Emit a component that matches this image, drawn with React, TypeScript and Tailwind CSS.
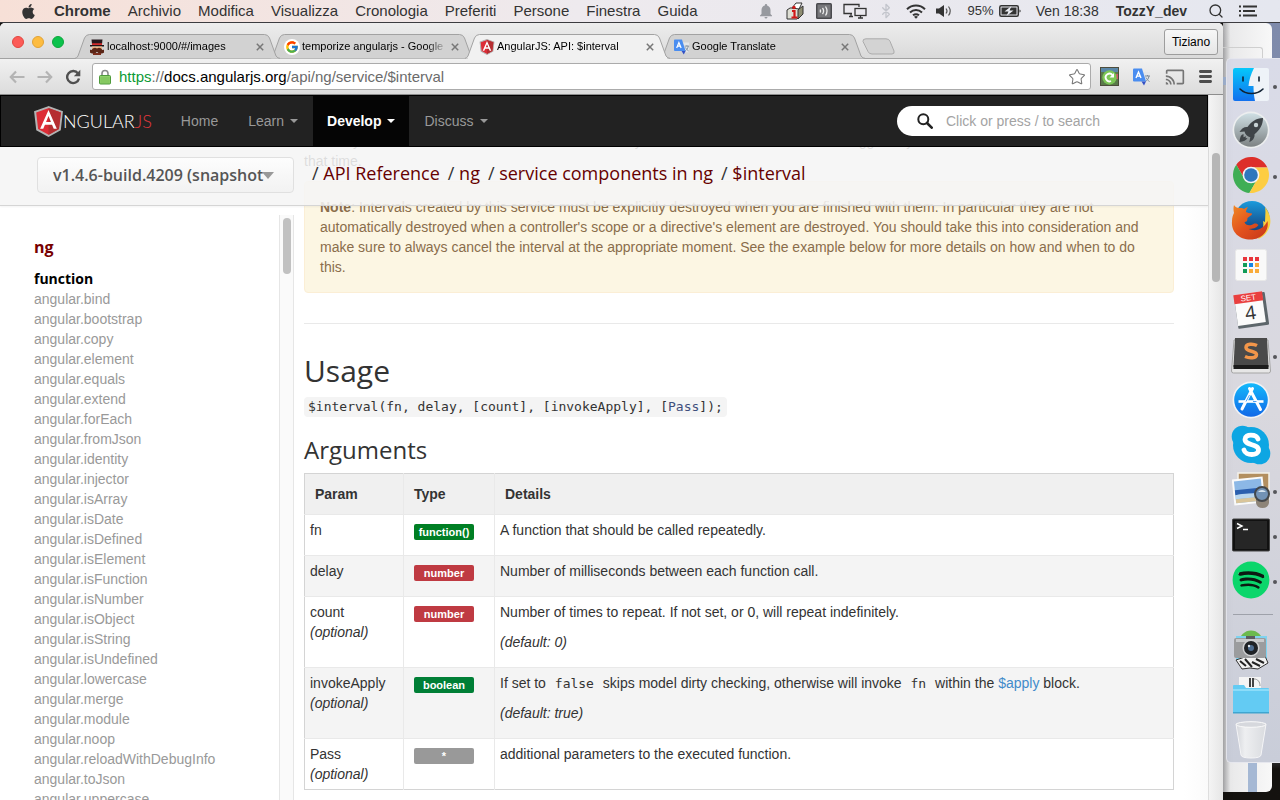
import React from "react";
import { FaApple, FaSpotify } from "react-icons/fa";
import { FcGoogle } from "react-icons/fc";
import { MdNotifications, MdCast } from "react-icons/md";
import { Bluetooth, Search, Star } from "lucide-react";

const sans = "font-['Liberation_Sans',Arial,sans-serif]";
const open = "font-['Open_Sans',sans-serif]";
const mono = "font-['DejaVu_Sans_Mono',monospace]";

/* ---------- Small icons ---------- */

function AngularShield({ className }: { className: string }) {
  return (
    <svg viewBox="24 22 202 216" className={className} aria-hidden="true">
      <path d="M125 30L31.9 63.2l14.2 123.1L125 230l78.9-43.7 14.2-123.1z" fill="#dd2c36" stroke="#b3b3b3" strokeWidth="14" />
      <path d="M125 36v188l73-41 14-116z" fill="#b52e31" />
      <path d="M125 50L66.8 180h21.7l11.7-28h49.4l11.7 28H183L125 50zm17 83h-34l17-41 17 41z" fill="#fff" />
    </svg>
  );
}

function TranslateIcon({ className }: { className: string }) {
  return (
    <svg viewBox="0 0 18 18" className={className} aria-hidden="true">
      <path d="M8 4h9v11H10z" fill="#e4e6e8" />
      <path d="M12 8h5M14.500 7v1M16 8c-.5 3-2 4.500-3.500 5.500M13 9.500c.5 1.500 2 3 3.500 4" stroke="#7d8b99" strokeWidth="1" fill="none" />
      <path d="M0 1.500Q0 .5 1 .5h8l4 13H1q-1 0-1-1z" fill="#4a8df0" />
      <path d="M8.500 13.500H13l-2 4z" fill="#3451c4" />
      <path d="M3 10L5.500 4l2.500 6M3.900 8.100h3.200" stroke="#fff" strokeWidth="1.400" fill="none" />
    </svg>
  );
}

function MustacheMan() {
  return (
    <svg viewBox="0 0 16 16" className="size-4" aria-hidden="true">
      <path d="M2.500.5h11l-.6 5.500H3.100z" fill="#26181c" />
      <path d="M3 4.300h10V6H3z" fill="#d32b2b" />
      <path d="M1 6h14v1.600H1z" fill="#1f1517" />
      <path d="M3 7.600h10V12H3z" fill="#f0b98a" />
      <path d="M8 9.500c2-1.500 4-.5 5 1 .7.800 1.500.5 2 0v3c-1.500 1.500-5.500 1.500-7-.8-1.500 2.300-5.500 2.300-7 .8v-3c.5.5 1.300.8 2 0 1-1.500 3-2.500 5-1z" fill="#5b2617" />
      <path d="M4 14h8v2H4z" fill="#7a2d1c" />
    </svg>
  );
}

function Padlock() {
  return (
    <svg viewBox="0 0 12 16" className="h-4 w-3" aria-hidden="true">
      <path d="M3 7V4.500a3 3 0 0 1 6 0V7" fill="none" stroke="#8b8b8b" strokeWidth="1.600" />
      <rect x=".5" y="6.500" width="11" height="8.500" rx="1" fill="#8fd16a" stroke="#4f9a3c" />
      <path d="M1.500 9h9M1.500 11h9M1.500 13h9" stroke="#72b852" strokeWidth=".7" />
    </svg>
  );
}

function Caret() {
  return (
    <svg viewBox="0 0 8 4" className="ml-1.5 h-1 w-2 fill-current" aria-hidden="true">
      <path d="M0 0h8L4 4z" />
    </svg>
  );
}

/* ---------- Menu bar ---------- */

const menus = ["Archivio", "Modifica", "Visualizza", "Cronologia", "Preferiti", "Persone", "Finestra", "Guida"];

function MenuBar() {
  return (
    <header className="flex h-[23px] shrink-0 items-center border-b border-[#3c3c40] bg-linear-to-r from-[#f7e0d7] via-[#eeeaee] via-45% to-[#e5e7ef] text-[15px] leading-[22px] text-[#333]">
      <FaApple className="ml-5 size-[17px]" />
      <nav className="ml-[17px] flex gap-[17px]">
        <button className="font-bold">Chrome</button>
        {menus.map((m) => (
          <button key={m}>{m}</button>
        ))}
      </nav>
      <div className="ml-auto flex items-center">
        <MdNotifications className="mr-[11px] size-[18px] text-[#97999f]" />
        <svg viewBox="0 0 18 18" className="mr-3 size-[18px]" aria-hidden="true">
          <path d="M1 8l3-2 9 0v9l-2 2H1z" fill="#deded4" stroke="#333" />
          <path d="M6 6l4-5h6l-3 6z" fill="#fff" stroke="#333" />
          <path d="M13 7l4-3v8l-5 5V8z" fill="#8f8d72" stroke="#333" />
          <path d="M6 9h2.500v6M5.500 15.500h6" stroke="#d01818" strokeWidth="2.200" fill="none" />
          <circle cx="8" cy="5.500" r="1.700" fill="#d01818" />
        </svg>
        <svg viewBox="0 0 16 16" className="mr-[11px] size-4" aria-hidden="true">
          <rect width="16" height="16" rx="1.500" fill="#4a4a4e" />
          <rect x="1.500" y="1.500" width="13" height="13" fill="#77777b" />
          <path d="M4 6.500c.8 1 .8 2 0 3M6.500 5c1.500 2 1.500 4 0 6M9.500 3.500c2 3 2 6 0 9" stroke="#eee" strokeWidth="1.300" fill="none" />
        </svg>
        <svg viewBox="0 0 24 16" className="mr-[11px] h-4 w-6" fill="none" stroke="#333" strokeWidth="1.300" aria-hidden="true">
          <path d="M9 10.500H1V1.500h15V4M6 13.500h4M8 10.500v3" />
          <rect x="12" y="5.500" width="11" height="7" />
          <path d="M15 15h5M17.500 12.500V15" />
        </svg>
        <Bluetooth className="mr-3 size-4 text-[#c3c5cc]" strokeWidth={2} />
        <svg viewBox="0 0 20 15" className="mr-[9px] h-[15px] w-5" fill="none" stroke="#333" strokeWidth="2" aria-hidden="true">
          <path d="M1 5.200a13 13 0 0 1 18 0M4 8.400a9 9 0 0 1 12 0M7 11.300a5 5 0 0 1 6 0" />
          <path d="M10 14.800l-2-2a3 3 0 0 1 4 0z" fill="#333" stroke="none" />
        </svg>
        <svg viewBox="0 0 18 14" className="mr-[15px] h-3.5 w-[18px]" aria-hidden="true">
          <path d="M1 4.500h3L9 1v12L4 9.500H1z" fill="#333" />
          <path d="M11 4.500c1.200 1.500 1.200 3.500 0 5M13.500 2.500c2.300 3 2.300 6 0 9" stroke="#555" strokeWidth="1.200" fill="none" />
        </svg>
        <span className="mr-[5px] text-[13px]">95%</span>
        <svg viewBox="0 0 23 12" className="mr-3.5 h-3 w-[23px]" aria-hidden="true">
          <rect x=".8" y=".8" width="18.500" height="10.400" rx="1.500" fill="none" stroke="#333" strokeWidth="1.500" />
          <rect x="2.500" y="2.500" width="15" height="7" fill="#333" />
          <path d="M20.500 4.500c1.500.3 1.500 2.700 0 3z" fill="#333" />
          <path d="M12.500 1L5.500 6.600h4L7.500 11l7-5.600h-4z" fill="#eceef4" />
        </svg>
        <span className="mr-[17px] text-[14px]">Ven 18:38</span>
        <span className="mr-[21px] text-[14px] font-bold">TozzY_dev</span>
        <Search className="mr-[15px] size-4" strokeWidth={2} />
        <svg viewBox="0 0 18 12" className="mr-[23px] h-3 w-[18px]" stroke="#333" strokeWidth="2" aria-hidden="true">
          <path d="M0 1.500h2M4 1.500h14M0 6h2M4 6h12M0 10.500h2M4 10.500h14" />
        </svg>
      </div>
    </header>
  );
}

/* ---------- Browser chrome ---------- */

interface TabProps {
  title: string;
  icon: React.ReactNode;
  active?: boolean;
  layer: string;
}

function Tab({ title, icon, active, layer }: TabProps) {
  return (
    <div className={"relative -ml-2.5 flex h-[25px] w-[205px] items-center pr-[11px] pl-3.5 " + layer}>
      <svg viewBox="0 0 205 25" preserveAspectRatio="none" className="absolute inset-0 size-full" aria-hidden="true">
        <path
          d="M-1 24.500Q2 24.500 3 22L9.500 4Q11 .5 14.500 .5H189.500Q193 .5 194.500 4L201 22Q202.500 24.500 206 24.500"
          fill={active ? "#f1f1f1" : "#d2d2d2"}
          stroke="#a2a2a2"
        />
        {active && <path d="M3 24.500H202" stroke="#f1f1f1" strokeWidth="1.500" />}
      </svg>
      <span className="relative flex size-4 shrink-0 items-center justify-center">{icon}</span>
      <span className="relative ml-0.5 flex-1 overflow-hidden text-[11px] whitespace-nowrap text-black [mask-image:linear-gradient(to_right,black_85%,transparent)]">
        {title}
      </span>
      <button aria-label="Chiudi scheda" className="relative mr-0.5 flex size-3.5 shrink-0 items-center justify-center">
        <svg viewBox="0 0 8 8" className="size-2" stroke="#777" strokeWidth="1.500" aria-hidden="true">
          <path d="M.8.8l6.400 6.400M7.200.8L.8 7.200" />
        </svg>
      </button>
    </div>
  );
}

function TabStrip() {
  return (
    <div className="flex h-9 shrink-0 items-end border-b border-[#a2a2a2] bg-linear-to-b from-[#ededed] to-[#dadada] pl-3">
      <div className="flex h-full items-center gap-2 pt-0.5">
        <button aria-label="Chiudi" className="size-3 rounded-full border border-[#e2463f] bg-[#fc5b57]" />
        <button aria-label="Riduci" className="size-3 rounded-full border border-[#e1a336] bg-[#fdbc40]" />
        <button aria-label="Ingrandisci" className="size-3 rounded-full border border-[#0ea63d] bg-[#0bc24c]" />
      </div>
      <div className="-mb-px ml-[21px] flex">
        <Tab layer="z-[3]" title="localhost:9000/#/images" icon={<MustacheMan />} />
        <Tab
          layer="z-[2]"
          title="temporize angularjs - Google"
          icon={<span className="rounded-full bg-white p-px"><FcGoogle className="size-3.5" /></span>}
        />
        <Tab layer="z-[4]" active title="AngularJS: API: $interval" icon={<AngularShield className="size-4" />} />
        <Tab layer="z-[1]" title="Google Translate" icon={<TranslateIcon className="size-4" />} />
      </div>
      <button aria-label="Nuova scheda" className="mb-[3px] -ml-1">
        <svg viewBox="0 0 34 17" className="h-[17px] w-[34px]" aria-hidden="true">
          <path d="M5 .8h20q3 0 4 2.500L33 13q.8 3-2 3H11q-3 0-4-2.500L2 3.500Q1.500.8 5 .8z" fill="#d3d3d3" stroke="#ababab" />
        </svg>
      </button>
      <button className="mr-[5px] mb-[3px] ml-auto h-[26px] w-[54px] rounded-[3px] border border-[#9d9d9d] bg-linear-to-b from-[#f7f7f7] to-[#e6e6e6] text-[12px] text-black">
        Tiziano
      </button>
    </div>
  );
}

function Toolbar() {
  return (
    <div className="flex h-9 shrink-0 items-center border-b border-[#8d8d8d] bg-linear-to-b from-[#f1f1f1] to-[#dcdcdc] pl-[9px]">
      <button aria-label="Indietro">
        <svg viewBox="0 0 16 14" className="h-3.5 w-4" fill="none" stroke="#b4b4b4" strokeWidth="2.200" aria-hidden="true">
          <path d="M7 1.500L1.800 7 7 12.500M2 7h13.500" />
        </svg>
      </button>
      <button aria-label="Avanti" className="ml-3">
        <svg viewBox="0 0 16 14" className="h-3.5 w-4" fill="none" stroke="#b4b4b4" strokeWidth="2.200" aria-hidden="true">
          <path d="M9 1.500L14.200 7 9 12.500M14 7H.5" />
        </svg>
      </button>
      <button aria-label="Ricarica" className="ml-3">
        <svg viewBox="0 0 16 16" className="size-4" aria-hidden="true">
          <path d="M13 4.500A6 6 0 1 0 14 9.500" fill="none" stroke="#505050" strokeWidth="2.400" />
          <path d="M15.300.8v6.500H8.800z" fill="#505050" />
        </svg>
      </button>
      <div className="ml-[11px] flex h-[27px] flex-1 items-center rounded-[3px] border border-[#ababab] bg-white pr-1 pl-1.5">
        <Padlock />
        <a href="https://docs.angularjs.org/api/ng/service/$interval" className="ml-2 text-[15px] leading-[22px] text-[#6b6b6b]">
          <span className="text-[#0b9a36]">https</span>://<span className="text-black">docs.angularjs.org</span>/api/ng/service/$interval
        </a>
        <button aria-label="Preferiti" className="ml-auto">
          <Star className="size-[18px] text-[#777]" strokeWidth={1.4} />
        </button>
      </div>
      <div className="mr-[11px] ml-[9px] flex items-center gap-3.5">
        <svg viewBox="0 0 19 19" className="size-[19px]" aria-hidden="true">
          <rect x=".5" y=".5" width="18" height="18" fill="#5a7a4a" stroke="#4d4d3c" />
          <path d="M1 1h17v4H1z" fill="#5a87a8" />
          <path d="M16 7h2v5h-2z" fill="#c9566a" />
          <circle cx="9.500" cy="10.500" r="7.200" fill="#7cc756" />
          <path d="M12.500 8.200A3.800 3.800 0 1 0 11 14" fill="none" stroke="#fff" strokeWidth="1.900" />
          <path d="M14 6v4.500H9.500z" fill="#fff" />
        </svg>
        <TranslateIcon className="size-[18px]" />
        <MdCast className="size-5 text-[#757575]" />
        <button aria-label="Menu">
          <svg viewBox="0 0 13 13" className="h-[13px] w-[13px]" stroke="#4d4d4d" strokeWidth="2.800" strokeLinecap="round" aria-hidden="true">
            <path d="M1.400 1.500h10.200M1.400 6.500h10.200M1.400 11.500h10.200" />
          </svg>
        </button>
      </div>
    </div>
  );
}

/* ---------- Page ---------- */

function Navbar() {
  const link = "flex h-full items-center px-[15px]";
  return (
    <nav className="relative z-20 flex h-[52px] shrink-0 items-center border border-black bg-[#222] pr-[18px] text-[14px] text-[#999]">
      <a href="#top" className="ml-[33px] flex items-center font-['Lato',sans-serif] text-[18px] leading-5 font-light text-white">
        <AngularShield className="h-[31px] w-[29px]" />
        <span>
          NGULAR<span className="text-[#e0383d]">JS</span>
        </span>
      </a>
      <div className="ml-3.5 flex h-full">
        <a href="#home" className={link}>Home</a>
        <a href="#learn" className={link}>Learn<Caret /></a>
        <a href="#develop" className="flex h-full items-center bg-[#050505] px-3.5 font-bold text-white">Develop<Caret /></a>
        <a href="#discuss" className={link}>Discuss<Caret /></a>
      </div>
      <label className="ml-auto flex h-[30px] w-[292px] items-center rounded-full bg-white pl-5">
        <svg viewBox="0 0 16 16" className="size-4" fill="none" stroke="#222" aria-hidden="true">
          <circle cx="6.300" cy="6.300" r="5" strokeWidth="2" />
          <path d="M10 10l4.700 4.700" strokeWidth="2.600" strokeLinecap="round" />
        </svg>
        <input
          aria-label="Search"
          placeholder="Click or press / to search"
          className="ml-[13px] min-w-0 flex-1 bg-transparent text-[14px] outline-none placeholder:text-[#a3a3a3]"
        />
      </label>
    </nav>
  );
}

const crumbs = ["API Reference", "ng", "service components in ng", "$interval"];

function SubHeader() {
  return (
    <div className="relative z-10 flex h-[59px] shrink-0 items-center border-b border-[#d5d5d5] bg-[#f5f5f5]/88 shadow-xs">
      <div className="relative -mt-0.5 ml-[37px] w-[257px] shrink-0">
        <select
          aria-label="Version"
          className={"h-9 w-full appearance-none rounded-[4px] border border-[#e0e0e0] bg-linear-to-b from-[#fdfdfd] to-[#f2f2f2] pr-5 pl-[15px] text-[16px] font-semibold text-[#555] " + open}
        >
          <option>v1.4.6-build.4209 (snapshot</option>
        </select>
        <svg viewBox="0 0 12 7" className="pointer-events-none absolute top-[15px] right-5 h-[7px] w-3" aria-hidden="true">
          <path d="M0 0h12L6 7z" fill="#999" />
        </svg>
      </div>
      <ol className={"-mt-1.5 ml-[18px] flex text-[18px] leading-6 text-[#333] " + open}>
        {crumbs.map((c) => (
          <li key={c} className="mr-2">
            / <a href="#crumb" className="text-[#600]">{c}</a>
          </li>
        ))}
      </ol>
    </div>
  );
}

const functions = [
  "bind", "bootstrap", "copy", "element", "equals", "extend", "forEach", "fromJson", "identity", "injector",
  "isArray", "isDate", "isDefined", "isElement", "isFunction", "isNumber", "isObject", "isString", "isUndefined",
  "lowercase", "merge", "module", "noop", "reloadWithDebugInfo", "toJson", "uppercase",
];

function Sidebar() {
  return (
    <aside className="flex w-[294px] shrink-0 overflow-hidden pt-[68px]">
      <div className="flex-1 pt-5 pl-[34px]">
        <h2 className={"text-[16px] leading-6 font-bold text-[#700] " + open}>
          <a href="#ng">ng</a>
        </h2>
        <h3 className={"mt-2.5 text-[14px] leading-5 font-bold text-black " + open}>function</h3>
        <ul className="text-[14px] leading-5 text-[#999]">
          {functions.map((f) => (
            <li key={f}>
              <a href={"#" + f}>{"angular." + f}</a>
            </li>
          ))}
        </ul>
      </div>
      <div className="w-[15px] border-x border-[#e6e6e6] bg-[#fafafa] px-[3px] pt-[3px]">
        <div className="mx-auto h-14 w-2 rounded-full bg-[#c1c1c1]" />
      </div>
    </aside>
  );
}

function Badge({ label, className }: { label: string; className: string }) {
  return (
    <span className={"mt-1 block h-4 w-[60px] rounded-[2px] text-center text-[11px] leading-4 font-bold text-white " + className}>
      {label}
    </span>
  );
}

interface Row {
  name: string;
  optional?: boolean;
  type: string;
  color: string;
  body: React.ReactNode;
  def?: string;
}

const code = "px-[5px] text-[13px] leading-4 text-[#333] " + mono;

const rows: Row[] = [
  { name: "fn", type: "function()", color: "bg-[#007f24]", body: "A function that should be called repeatedly." },
  { name: "delay", type: "number", color: "bg-[#bf3a42]", body: "Number of milliseconds between each function call." },
  {
    name: "count", optional: true, type: "number", color: "bg-[#bf3a42]", def: "(default: 0)",
    body: "Number of times to repeat. If not set, or 0, will repeat indefinitely.",
  },
  {
    name: "invokeApply", optional: true, type: "boolean", color: "bg-[#007f36]", def: "(default: true)",
    body: (
      <>
        If set to <code className={code}>false</code> skips model dirty checking, otherwise will invoke{" "}
        <code className={code}>fn</code> within the <a href="#apply" className="text-[#428bca]">$apply</a> block.
      </>
    ),
  },
  { name: "Pass", optional: true, type: "*", color: "bg-[#999]", body: "additional parameters to the executed function." },
];

function ArgumentsTable() {
  const th = "h-[41px] border-[#e9e9e9] px-2.5 text-left font-bold";
  return (
    <table className="mt-2.5 w-full table-fixed border-collapse border border-[#d4d4d4] text-[14px] leading-5 text-[#333]">
      <thead>
        <tr className="bg-[#f0f0f0]">
          <th className={th + " w-[99px]"}>Param</th>
          <th className={th + " w-[91px] border-l"}>Type</th>
          <th className={th + " border-l"}>Details</th>
        </tr>
      </thead>
      <tbody>
        {rows.map((r) => (
          <tr key={r.name} className="border-t border-[#e9e9e9] align-top even:bg-[#f4f4f4]">
            <td className="p-[5px]">
              {r.name}
              {r.optional && <em className="block">(optional)</em>}
            </td>
            <td className="border-l border-[#e9e9e9] px-2.5 py-[5px]">
              <Badge label={r.type} className={r.color} />
            </td>
            <td className="border-l border-[#e9e9e9] p-[5px]">
              <p className="mb-2.5">{r.body}</p>
              {r.def && <p className="mb-2.5 italic">{r.def}</p>}
            </td>
          </tr>
        ))}
      </tbody>
    </table>
  );
}

function Content() {
  return (
    <main className="min-w-0 flex-1 bg-linear-to-l from-[#fafafa] to-white to-[24px] pr-[34px] pl-2.5 text-[14px] leading-5 text-[#333]">
      <p className="-mt-4 mb-2.5">
        In tests you can use $interval.flush to move forward by a number of milliseconds and to trigger any functions scheduled to run in
        <br />
        that time.
      </p>
      <div className="rounded-[4px] border border-[#fbeed5] bg-[#fcf6e3] p-[15px] text-[#8a6d4b]">
        <b>Note</b>: Intervals created by this service must be explicitly destroyed when you are finished with them. In particular they are not automatically destroyed when a controller's scope or a directive's element are destroyed. You should take this into consideration and make sure to always cancel the interval at the appropriate moment. See the example below for more details on how and when to do this.
      </div>
      <hr className="mt-[30px] border-[#e9e9e9]" />
      <h2 className={"mt-[30px] text-[30px] leading-[33px] " + open}>Usage</h2>
      <code className={"mt-2.5 block w-fit rounded-[4px] bg-[#f4f4f4] px-1 text-[13px] leading-5 text-[#333] " + mono}>
        $interval(fn, delay, [count], [invokeApply], [<span className="text-[#3f4f7c]">Pass</span>]);
      </code>
      <h3 className={"mt-5 text-[24px] leading-[26px] " + open}>Arguments</h3>
      <ArgumentsTable />
    </main>
  );
}

/* ---------- Dock ---------- */

function Dot() {
  return <span className="absolute top-1/2 right-[3px] size-1 rounded-full bg-[#55565a]" />;
}

function DockItem({ label, running, children }: { label: string; running?: boolean; children: React.ReactNode }) {
  return (
    <li className="relative h-[45px]">
      <button aria-label={label} className="ml-[5px] flex h-full w-[38px] items-center justify-center">
        {children}
      </button>
      {running && <Dot />}
    </li>
  );
}

const pic = "size-[38px] shrink-0";

function Dock() {
  return (
    <ul className="relative mt-[35px] ml-[3px] h-[705px] rounded-l-[5px] border border-r-0 border-[#e6e7ee] bg-linear-to-b from-[#d9dbe8] via-[#d9d8de] to-[#c9cdd9] pt-[3px]">
      <DockItem label="Finder" running>
        <svg viewBox="0 0 38 38" className={pic} aria-hidden="true">
          <defs>
            <linearGradient id="finder" x2="0" y2="1"><stop stopColor="#05c8fb" /><stop offset="1" stopColor="#1270ee" /></linearGradient>
          </defs>
          <rect x="1" y="2" width="36" height="33" rx="2" fill="#eef3f8" />
          <path d="M3 2h19c-3 6-5 12-5.500 18h5c0 6 .5 10 1.500 15H3q-2 0-2-2V4q0-2 2-2z" fill="url(#finder)" />
          <path d="M11 11v4M27 11v4" stroke="#123" strokeWidth="1.600" strokeLinecap="round" />
          <path d="M8 23c6 6 17 6 23 0" stroke="#123" strokeWidth="1.600" fill="none" strokeLinecap="round" />
        </svg>
      </DockItem>
      <DockItem label="Launchpad">
        <svg viewBox="0 0 38 38" className={pic} aria-hidden="true">
          <defs>
            <linearGradient id="launch" x2="0" y2="1"><stop stopColor="#cfdfe4" /><stop offset="1" stopColor="#7d8283" /></linearGradient>
          </defs>
          <circle cx="19" cy="19" r="18.500" fill="#eceeef" />
          <circle cx="19" cy="19" r="16.800" fill="url(#launch)" />
          <path d="M31 7c-7 0-12 4-15.500 9-3-.5-6 1.500-8 5l5-.6c.5 2.800 3 5.300 5.800 5.800l-1 5c3.500-1.500 5.700-4.700 5.200-8C27.500 19.500 31 14 31 7zM11.500 23c-3 .7-3.500 4-4 8 4-.5 7-1.500 8-4l-2 .3.500-2-2.500 1z" fill="#3f4448" />
          <circle cx="24" cy="14" r="2.200" fill="#c8d3d6" />
        </svg>
      </DockItem>
      <DockItem label="Chrome" running>
        <svg viewBox="0 0 40 40" className={pic} aria-hidden="true">
          <path d="M13.070 24L4.500 9.100A19 19 0 0 1 37.200 12H20z" fill="#dd2f2a" />
          <path d="M26.930 24L18.300 38.900A19 19 0 0 1 4.500 9.100L13.070 24z" fill="#3fae55" />
          <path d="M20 12h17.200A19 19 0 0 1 18.300 38.900L26.930 24z" fill="#fdcd42" />
          <circle cx="20" cy="20" r="8.800" fill="#f3f4f6" />
          <circle cx="20" cy="20" r="7.200" fill="#2f77bd" />
        </svg>
      </DockItem>
      <DockItem label="Firefox">
        <svg viewBox="0 0 40 40" className="size-10 shrink-0" aria-hidden="true">
          <defs>
            <linearGradient id="globe" x2="0" y2="1"><stop stopColor="#1c9bdc" /><stop offset="1" stopColor="#12326e" /></linearGradient>
            <linearGradient id="fox" x2="1" y2="1"><stop stopColor="#f08a24" /><stop offset=".5" stopColor="#e2511d" /><stop offset="1" stopColor="#c5361a" /></linearGradient>
          </defs>
          <circle cx="21" cy="18.500" r="17.500" fill="url(#globe)" />
          <path d="M34 7c5 6 7 14 4 21-2 5-6 9-11 11 5-7 6-13 5-18l2 1c0-5 1-10 0-15z" fill="#f8cf3c" />
          <path d="M3 5c1 2 3 3 5 3 2-.3 4 0 5 1 1-1 3-2 4-2-1 2-2 3-2 5 1 1 4 1 6 1.500.5 1.500-3 3-4.500 4.500 0 3-1 4-3 4 1 4 6 4 9 2 2-1 4 0 5 1-2 3-6 4-10 4 8 3 15 0 19-8 2 10-6 18.500-17 18.500C8 39.500 0 32 1 21c.2-4 1-6 2-8-.5-3-.8-5 0-8z" fill="url(#fox)" />
        </svg>
      </DockItem>
      <DockItem label="App Launcher">
        <svg viewBox="0 0 32 32" className="size-8 shrink-0" aria-hidden="true">
          <rect x=".5" y=".5" width="31" height="31" rx="2" fill="#f9f9f9" stroke="#e8e8e8" />
          <path d="M8 8h4v4H8zM14 8h4v4h-4zM20 8h4v4h-4z" fill="#e8353b" />
          <path d="M8 14h4v4H8zM8 20h4v4H8z" fill="#109b58" />
          <path d="M14 14h4v4h-4z" fill="#1486e4" />
          <path d="M20 14h4v4h-4zM14 20h4v4h-4zM20 20h4v4h-4z" fill="#f9ab3a" />
        </svg>
      </DockItem>
      <DockItem label="Calendario">
        <svg viewBox="0 0 38 40" className="h-10 w-[38px] shrink-0" aria-hidden="true">
          <g transform="rotate(-8 19 20)">
            <rect x="4" y="4" width="31" height="33" rx="1" fill="#5d666b" />
            <rect x="4" y="3" width="28" height="31" fill="#fbfbfb" />
            <rect x="3.500" y="3" width="29" height="9" fill="#e9403f" />
            <text x="18" y="10.300" fontSize="8" textAnchor="middle" fill="#fff" fontFamily="Liberation Sans, sans-serif">SET</text>
            <text x="18" y="29.500" fontSize="19" textAnchor="middle" fill="#333" fontFamily="Open Sans, sans-serif">4</text>
          </g>
        </svg>
      </DockItem>
      <DockItem label="Sublime Text" running>
        <svg viewBox="0 0 40 38" className="h-[38px] w-10 shrink-0" aria-hidden="true">
          <path d="M3 4h34l2.500 31q0 2-2 2h-35q-2 0-2-2z" fill="#e6e6e6" stroke="#a5a5a5" />
          <path d="M4 2h32l1.500 29h-35z" fill="#4a4a4a" />
          <path d="M2.500 29h35v4h-35z" fill="#1c1c1c" />
          <path d="M26 9.500c-4-2-11-2-11 2 0 4.500 10.500 3 10.500 7 0 4-7 4-11.500 2" fill="none" stroke="#f3964a" strokeWidth="3.500" />
        </svg>
      </DockItem>
      <DockItem label="App Store">
        <svg viewBox="0 0 38 38" className={pic} aria-hidden="true">
          <defs>
            <linearGradient id="store" x2="0" y2="1"><stop stopColor="#14b9fb" /><stop offset="1" stopColor="#1168e8" /></linearGradient>
          </defs>
          <circle cx="19" cy="19" r="18.500" fill="#f1f3f6" />
          <circle cx="19" cy="19" r="16.800" fill="url(#store)" />
          <path d="M20.500 7.500L10 28M17.500 7.500L28.500 28.500" stroke="#fff" strokeWidth="3" strokeLinecap="round" />
          <path d="M6.500 20.500H31.500" stroke="#fff" strokeWidth="2.600" />
          <path d="M14 20.500L17.500 14M21 20.500h3.500" stroke="#2a8cf0" strokeWidth=".8" />
        </svg>
      </DockItem>
      <DockItem label="Skype">
        <svg viewBox="0 0 40 40" className="size-10 shrink-0" aria-hidden="true">
          <circle cx="20" cy="20" r="18" fill="#0da6e3" />
          <circle cx="11.500" cy="11.500" r="10.800" fill="#0da6e3" />
          <circle cx="28.500" cy="28.500" r="10.800" fill="#0da6e3" />
          <path d="M27 14c-1.500-5-13-5.500-13 .3 0 6.700 13.500 4.200 13.500 10.700 0 6-13 6-14.500 0" fill="none" stroke="#fff" strokeWidth="4.800" strokeLinecap="round" />
        </svg>
      </DockItem>
      <DockItem label="Anteprima" running>
        <svg viewBox="0 0 38 36" className="h-9 w-[38px] shrink-0" aria-hidden="true">
          <rect x="6" y="1" width="31" height="26" fill="#b38f60" stroke="#f5f2ea" strokeWidth="1.500" />
          <g transform="rotate(-6 16 19)">
            <rect x="1" y="6" width="31" height="26" fill="#fafafa" />
            <rect x="3" y="8" width="27" height="22" fill="#8cb8e6" />
            <path d="M3 17h27v5H3z" fill="#2b5fae" />
            <path d="M3 22c9-2 18 1 27 0v4H3z" fill="#b9d6ee" />
            <path d="M3 26h27v4H3z" fill="#d9c59a" />
          </g>
          <path d="M24 24h13v7q-1 5-6.500 5T24 31z" fill="#8d8478" />
          <circle cx="30" cy="22" r="7" fill="#7292b5" stroke="#44474a" strokeWidth="2" />
          <path d="M26 20a5 5 0 0 1 8 0z" fill="#d7e4ef" />
        </svg>
      </DockItem>
      <DockItem label="Terminale" running>
        <svg viewBox="0 0 38 34" className="h-[34px] w-[38px] shrink-0" aria-hidden="true">
          <rect x=".5" y="1" width="37" height="32" rx="1" fill="#111" stroke="#444" />
          <rect x="3" y="3" width="32" height="28" fill="#262626" />
          <path d="M5 5.500l5 2.500-5 2.500M11 11.500h5" stroke="#fff" strokeWidth="1.400" fill="none" />
        </svg>
      </DockItem>
      <DockItem label="Spotify" running>
        <span className="relative flex size-[38px] shrink-0 items-center justify-center">
          <span className="absolute size-7 rounded-full bg-[#0c1a12]" />
          <FaSpotify className="relative size-full text-[#0bd66b]" />
        </span>
      </DockItem>
      <li className="flex h-[25px] items-center pl-1.5" role="separator">
        <span className="h-px w-10 bg-[#9ea1aa]" />
      </li>
      <DockItem label="Acquisizione Immagine">
        <svg viewBox="0 0 36 40" className="h-10 w-9 shrink-0" aria-hidden="true">
          <circle cx="18" cy="12" r="11.500" fill="#6cba4e" />
          <path d="M3 6h31v24H3z" fill="#7fd3f0" />
          <path d="M3 30l9-3 20-1 3 7-10 6-8-1-8 1z" fill="#f1f1f1" stroke="#333" />
          <path d="M7 31l6 5M12 29l7 8M19 32l8 4M23 29l8 4" stroke="#222" strokeWidth="2" />
          <rect x="1" y="8" width="32" height="20" rx="2" fill="#9b9c9e" />
          <path d="M3 9h28v3H3z" fill="#c9cacc" />
          <rect x="13" y="6" width="9" height="3" fill="#5c5d60" />
          <circle cx="18" cy="18" r="8.500" fill="#d0d1d3" />
          <circle cx="18" cy="18" r="7" fill="#1f2226" />
          <circle cx="18" cy="18" r="3" fill="#4e6c8e" />
          <circle cx="16" cy="16" r="1.200" fill="#e0e8f0" />
        </svg>
      </DockItem>
      <DockItem label="Documenti">
        <svg viewBox="0 0 38 38" className={pic} aria-hidden="true">
          <path d="M7 1h22v14H7z" fill="#f4f4f4" />
          <path d="M17 2h2v9h-2zM20 2h2v9h-2z" fill="#444" />
          <path d="M22 3c4 0 6 3 6 7" stroke="#999" fill="none" />
          <path d="M1 10q0-1 1-1h10l2 3h22q1 0 1 1v24H1z" fill="#63cbf3" />
          <path d="M1 13h36v2H1z" fill="#8bdcf9" />
          <path d="M1 36h36v1.500H1z" fill="#3fa5d0" />
        </svg>
      </DockItem>
      <DockItem label="Cestino">
        <svg viewBox="0 0 32 38" className="h-[38px] w-8 shrink-0" aria-hidden="true">
          <defs>
            <linearGradient id="bin"><stop stopColor="#d3d5da" /><stop offset=".3" stopColor="#eeeff1" /><stop offset="1" stopColor="#d9dbdf" /></linearGradient>
          </defs>
          <path d="M1 3l5 31q.5 3 10 3t10-3l5-31z" fill="url(#bin)" stroke="#f5f5f7" />
          <ellipse cx="16" cy="3.500" rx="15" ry="2.800" fill="#d6d8dd" stroke="#fafafa" />
        </svg>
      </DockItem>
    </ul>
  );
}

function DesktopEdge() {
  return (
    <div className="relative w-[57px] shrink-0 overflow-hidden bg-linear-to-b from-[#7f8bab] via-[#8d96ac] via-92% to-[#14120f] to-96%">
      <div className="absolute top-0 bottom-2 left-0 flex w-[49px] flex-col rounded-r-[6px] bg-linear-to-r from-[#a9a9ab] via-[#e9e9ea] via-15% to-[#f8f8f8]">
        <div className="mt-6 h-5 w-10 rounded-tr-[3px] border-t border-r border-[#cfcfcf]" />
        <div className="mt-2.5 h-2 w-full bg-[#9fb1cf]" />
        <div className="ml-[25px] w-[9px] flex-1 bg-[#a5b8d4]" />
      </div>
      <Dock />
    </div>
  );
}

export default function App() {
  return (
    <div className={"flex h-screen flex-col overflow-hidden bg-[#141210] " + sans}>
      <MenuBar />
      <div className="flex min-h-0 flex-1">
        <section className="relative z-10 flex min-w-0 flex-1 flex-col overflow-hidden rounded-t-[5px] bg-white shadow-lg">
          <TabStrip />
          <Toolbar />
          <div className="flex min-h-0 flex-1">
            <div className="flex min-w-0 flex-1 flex-col">
              <Navbar />
              <SubHeader />
              <div className="-mt-[59px] flex min-h-0 flex-1 overflow-hidden">
                <Sidebar />
                <Content />
              </div>
            </div>
            <div className="w-[15px] shrink-0 border-l border-[#dedede] bg-linear-to-r from-[#f4f4f4] to-[#e6e6e6] pt-[58px] pl-[3px]">
              <div className="h-[129px] w-2 rounded-full bg-[#b6b6b6]" />
            </div>
          </div>
        </section>
        <DesktopEdge />
      </div>
    </div>
  );
}
